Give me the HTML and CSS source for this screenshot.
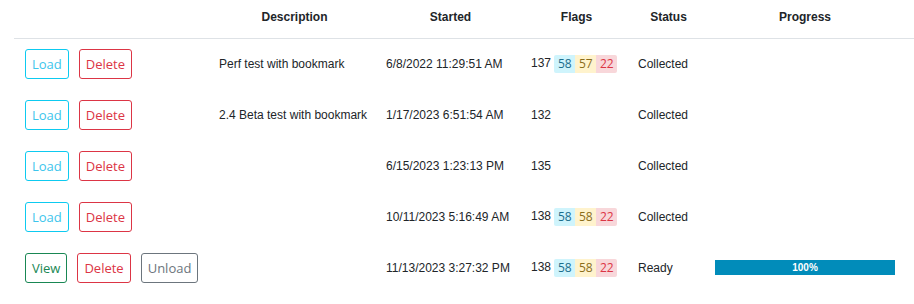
FILE: index.html
```html
<!DOCTYPE html>
<html lang="en">
<head>
  <meta charset="UTF-8" />
  <title>Sessions</title>
  <link rel="stylesheet" href="styles.css">
</head>
<body>

  <table class="session-table">
    <colgroup>
      <col class="col-actions">
      <col class="col-desc">
      <col class="col-started">
      <col class="col-flags">
      <col class="col-status">
      <col class="col-progress">
    </colgroup>
    <thead>
      <tr>
        <th></th>
        <th>Description</th>
        <th>Started</th>
        <th>Flags</th>
        <th>Status</th>
        <th>Progress</th>
      </tr>
    </thead>
    <tbody>
      <tr>
        <td class="actions">
          <button class="btn btn-info">Load</button>
          <button class="btn btn-danger">Delete</button>
        </td>
        <td>Perf test with bookmark</td>
        <td>6/8/2022 11:29:51 AM</td>
        <td>137 <span class="badges"><span class="badge info">58</span><span class="badge warn">57</span><span class="badge danger">22</span></span></td>
        <td>Collected</td>
        <td></td>
      </tr>
      <tr>
        <td class="actions">
          <button class="btn btn-info">Load</button>
          <button class="btn btn-danger">Delete</button>
        </td>
        <td>2.4 Beta test with bookmark</td>
        <td>1/17/2023 6:51:54 AM</td>
        <td>132</td>
        <td>Collected</td>
        <td></td>
      </tr>
      <tr>
        <td class="actions">
          <button class="btn btn-info">Load</button>
          <button class="btn btn-danger">Delete</button>
        </td>
        <td></td>
        <td>6/15/2023 1:23:13 PM</td>
        <td>135</td>
        <td>Collected</td>
        <td></td>
      </tr>
      <tr>
        <td class="actions">
          <button class="btn btn-info">Load</button>
          <button class="btn btn-danger">Delete</button>
        </td>
        <td></td>
        <td>10/11/2023 5:16:49 AM</td>
        <td>138 <span class="badges"><span class="badge info">58</span><span class="badge warn">58</span><span class="badge danger">22</span></span></td>
        <td>Collected</td>
        <td></td>
      </tr>
      <tr>
        <td class="actions">
          <button class="btn btn-success">View</button>
          <button class="btn btn-danger">Delete</button>
          <button class="btn btn-secondary">Unload</button>
        </td>
        <td></td>
        <td>11/13/2023 3:27:32 PM</td>
        <td>138 <span class="badges"><span class="badge info">58</span><span class="badge warn">58</span><span class="badge danger">22</span></span></td>
        <td>Ready</td>
        <td>
          <div class="progress"><div class="progress-bar" style="width: 100%">100%</div></div>
        </td>
      </tr>
    </tbody>
  </table>

</body>
</html>
```

FILE: styles.css
```css
body {
  margin: 0;
  background-color: #fff;
  font-family: 'Liberation Sans', Arial, sans-serif;
  font-size: 12px;
  color: #212529;
}

.session-table {
  margin-left: 14px;
  width: 900px;
  border-collapse: collapse;
  table-layout: fixed;
}

.col-actions { width: 197px; }
.col-desc { width: 167px; }
.col-started { width: 145px; }
.col-flags { width: 107px; }
.col-status { width: 77px; }
.col-progress { width: 207px; }

.session-table thead tr {
  height: 38px;
}

.session-table thead {
  border-bottom: 1px solid #dee2e6;
}

.session-table th {
  font-weight: bold;
  text-align: center;
  padding: 0 8px 4px;
  vertical-align: middle;
}

.session-table tbody tr {
  height: 51px;
}

.session-table td {
  padding: 0 8px;
  text-align: left;
  vertical-align: middle;
  white-space: nowrap;
}

.session-table th:last-child,
.session-table td:last-child {
  padding-right: 19px;
}

.session-table td.actions {
  padding-left: 11px;
  font-size: 0;
}

/* buttons */
.btn {
  font-family: 'Open Sans', sans-serif;
  font-size: 13px;
  height: 30px;
  padding: 0 6px;
  margin-right: 10px;
  vertical-align: middle;
  background: transparent;
  border: 1px solid;
  border-radius: 3px;
  cursor: pointer;
}

.btn-info {
  color: #3dc5ec;
  border-color: #0dcaf0;
}

.btn-danger {
  color: #dc3545;
  border-color: #dc3545;
}

.btn-success {
  color: #198754;
  border-color: #198754;
}

.btn-secondary {
  color: #6c757d;
  border-color: #6c757d;
}

/* flag badges */
.badges {
  display: inline-flex;
  vertical-align: middle;
}

.badge {
  display: inline-block;
  width: 21px;
  height: 18px;
  line-height: 18px;
  text-align: center;
  font-family: 'Open Sans', sans-serif;
  font-size: 12px;
}

.badge.info {
  background-color: #cff4fc;
  color: #1c6e8c;
  border-radius: 2px 0 0 2px;
}

.badge.warn {
  background-color: #fff3cd;
  color: #8a6d1b;
}

.badge.danger {
  background-color: #f8d7da;
  color: #dc3545;
  border-radius: 0 2px 2px 0;
}

/* progress */
.progress {
  height: 15px;
  background-color: #e9ecef;
}

.progress-bar {
  height: 100%;
  background-color: #018cba;
  color: #fff;
  font-size: 10px;
  font-weight: bold;
  line-height: 15px;
  text-align: center;
}
```
